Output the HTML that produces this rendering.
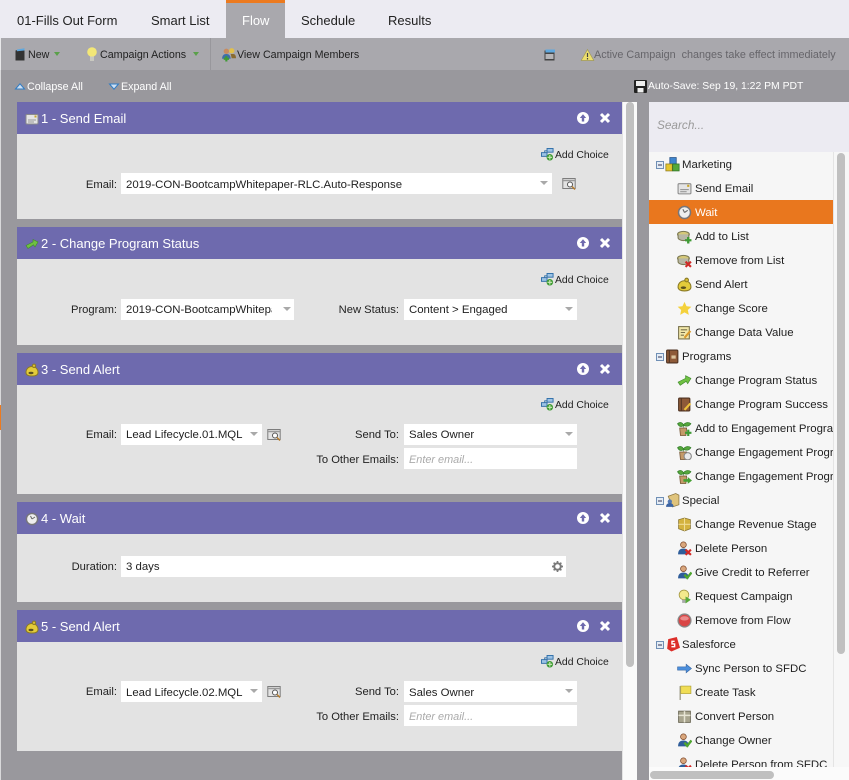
<!DOCTYPE html>
<html><head><meta charset="utf-8">
<style>
html,body{margin:0;padding:0;width:849px;height:780px;overflow:hidden;background:#99989d}
body{position:relative;font-family:"Liberation Sans",sans-serif;font-size:11.4px;color:#222}
.a{position:absolute}
.t{position:absolute;white-space:nowrap;line-height:16px;font-size:10.7px}
.tab{position:absolute;top:13px;font-size:13px;line-height:16px;color:#222;white-space:nowrap}
.hd{position:absolute;left:17px;width:605px;height:32px;background:#6e6aae}
.bd{position:absolute;left:17px;width:605px;background:#e3e3e3}
.ht{position:absolute;left:41px;color:#fff;font-size:13px;line-height:16px;white-space:nowrap}
.f{position:absolute;background:#fff;height:21px;line-height:22px;padding-left:5px;box-sizing:border-box;white-space:nowrap;overflow:hidden;color:#222;font-size:11.4px}
.f.lo{line-height:24px}
.ph{color:#aaa;font-style:italic;font-size:10.9px}
.c{position:absolute;width:0;height:0;border-left:4px solid transparent;border-right:4px solid transparent;border-top:4px solid #a9a9a9}
.l{position:absolute;text-align:right;white-space:nowrap;line-height:16px;color:#222;font-size:11.2px;transform:translateY(1px)}
.li{position:absolute;white-space:nowrap;line-height:16px;color:#222;font-size:11.4px}
.ac{position:absolute;left:555px;white-space:nowrap;line-height:16px;font-size:10.4px;color:#222;transform:translateY(1px)}
svg{position:absolute;overflow:visible}
</style></head><body>
<svg width="0" height="0" style="position:absolute"><defs>
<symbol id="mail" viewBox="0 0 14 14"><rect x="1" y="2.500" width="12" height="9.500" rx="1" fill="#e4e4e4" stroke="#8b8b8b"/><path d="M3 8h8M3 10h6" stroke="#999"/><rect x="9.500" y="3.500" width="2" height="2" fill="#c9a52a"/></symbol>
<symbol id="clock" viewBox="0 0 14 14"><circle cx="7" cy="7" r="5.600" fill="#eee" stroke="#77767a" stroke-width="1.400"/><path d="M7 7l3-2M7 7L5.500 4" stroke="#666"/></symbol>
<symbol id="listadd" viewBox="0 0 14 14"><ellipse cx="6" cy="5" rx="5.500" ry="2.800" fill="#d5c878" stroke="#7d7a55"/><path d="M1 5v3c0 1.500 2.500 2.800 5 2.800s5-1 5-2.800V5" fill="#b8b7a5" stroke="#7d7a55"/><path d="M10.500 7.500v6M7.500 10.500h6" stroke="#3f9b35" stroke-width="2.200"/></symbol>
<symbol id="listrm" viewBox="0 0 14 14"><ellipse cx="6" cy="5" rx="5.500" ry="2.800" fill="#d5c878" stroke="#7d7a55"/><path d="M1 5v3c0 1.500 2.500 2.800 5 2.800s5-1 5-2.800V5" fill="#b8b7a5" stroke="#7d7a55"/><path d="M8 8l5 5M13 8l-5 5" stroke="#cf2a27" stroke-width="2"/></symbol>
<symbol id="bell" viewBox="0 0 14 14"><path d="M1 9.500C1 6 3.500 3.500 7 3.500s6 2.500 6 6c0 2.300-2.500 3.500-6 3.500s-6-1.200-6-3.500z" fill="#e3cb3a" stroke="#8a7a25"/><circle cx="9" cy="2.800" r="1.700" fill="#d8bd35" stroke="#8a7a25"/><ellipse cx="6" cy="10" rx="2.500" ry="1.200" fill="#5a5020"/></symbol>
<symbol id="star" viewBox="0 0 14 14"><path d="M7 .8l1.900 4.100 4.500.5-3.300 3 .9 4.500L7 10.600 3 12.900l.9-4.500-3.300-3 4.500-.5z" fill="#f4d13b"/></symbol>
<symbol id="edit" viewBox="0 0 14 14"><rect x="1.500" y="1.500" width="10" height="11.500" fill="#f2e8a9" stroke="#77704a"/><path d="M3.500 4.500h6M3.500 7h4M3.500 9.500h3" stroke="#77704a"/><path d="M12.500 5.500L7 12" stroke="#d99a2b" stroke-width="2"/></symbol>
<symbol id="arrow" viewBox="0 0 14 14"><path d="M1 8.500l7-3.500V2.500l5 2.500-3 5-1.500-2.200L3 11.500z" fill="#6fc042" stroke="#3e8a2a" stroke-width=".6"/></symbol>
<symbol id="book" viewBox="0 0 14 14"><rect x="1.500" y="1" width="10.500" height="12" rx="1" fill="#8e5a38" stroke="#4f3322"/><path d="M4 1v12" stroke="#4f3322"/><path d="M6 6h4v3H6z" fill="#dcc39c"/></symbol>
<symbol id="booke" viewBox="0 0 14 14"><rect x="1.500" y="1" width="10.500" height="12" rx="1" fill="#8e5a38" stroke="#4f3322"/><path d="M4 1v12" stroke="#4f3322"/><path d="M12.500 6L7 12" stroke="#edc13a" stroke-width="2"/></symbol>
<symbol id="plant" viewBox="0 0 14 14"><path d="M6 6V3M.5 2.500C3 .5 5 1.500 6 3.500 8 1 11 .8 13 2.500 11 5.500 8 5 6 4 4.500 6 2 5.500.5 2.500z" fill="#55a63c" stroke="#2e7a25" stroke-width=".6"/><path d="M2.500 6.500h6.500l-.7 7H3.200z" fill="#c49a68" stroke="#72512f" stroke-width=".7"/></symbol>
<symbol id="plantadd" viewBox="0 0 14 14"><use href="#plant" width="14" height="14"/><path d="M10.500 8v6M7.500 11h6" stroke="#3f9b35" stroke-width="2"/></symbol>
<symbol id="plantclock" viewBox="0 0 14 14"><use href="#plant" width="14" height="14"/><circle cx="10" cy="10.500" r="3.400" fill="#e9e9e9" stroke="#888"/></symbol>
<symbol id="plantarrow" viewBox="0 0 14 14"><use href="#plant" width="14" height="14"/><path d="M6 9.500h4V7.500l4 3.200-4 3.200v-2H6z" fill="#46a032"/></symbol>
<symbol id="cubes" viewBox="0 0 14 14"><rect x="4.500" y=".5" width="6" height="6" fill="#3f86cf" stroke="#234f85" stroke-width=".7"/><rect x=".8" y="6.500" width="6" height="6.500" fill="#e5c62e" stroke="#8b7a20" stroke-width=".7"/><rect x="7.200" y="6.500" width="6" height="6.500" fill="#54a93a" stroke="#2f6f25" stroke-width=".7"/></symbol>
<symbol id="folder" viewBox="0 0 14 14"><path d="M3 3l7-2.500 3 1.500v9l-6 2z" fill="#e0c47c" stroke="#8d7640" stroke-width=".7"/><circle cx="4.500" cy="8" r="2" fill="#5479b2"/><path d="M1 13c0-2.500 1.500-3.500 3.500-3.500S8 10.500 8 13z" fill="#3c64a3"/></symbol>
<symbol id="box" viewBox="0 0 14 14"><path d="M1.500 2.500L7 1l5.500 1.500V11L7 13l-5.500-2z" fill="#d3b23f" stroke="#86722e" stroke-width=".7"/><path d="M7 1v12M1.500 6.800h11" stroke="#f0dc94"/></symbol>
<symbol id="pdel" viewBox="0 0 14 14"><circle cx="6" cy="3.500" r="2.700" fill="#d9a67c" stroke="#7e4a2c" stroke-width=".7"/><path d="M1 12.500c0-4 2-5.500 5-5.500s5 1.500 5 5.500z" fill="#2f5d9a"/><path d="M8 8l5 5M13 8l-5 5" stroke="#d32825" stroke-width="2"/></symbol>
<symbol id="pok" viewBox="0 0 14 14"><circle cx="6" cy="3.500" r="2.700" fill="#d9a67c" stroke="#7e4a2c" stroke-width=".7"/><path d="M1 12.500c0-4 2-5.500 5-5.500s5 1.500 5 5.500z" fill="#2f5d9a"/><path d="M7 9l2.500 3L13.500 7" stroke="#4ea52f" stroke-width="2.200" fill="none"/></symbol>
<symbol id="bulb" viewBox="0 0 14 14"><circle cx="6.500" cy="5.500" r="4.500" fill="#f4e98c" stroke="#a69a45" stroke-width=".8"/><rect x="4.800" y="10" width="3.400" height="3" fill="#aaa"/><path d="M8 7l5 3-5 3.500z" fill="#58a93a"/></symbol>
<symbol id="stop" viewBox="0 0 14 14"><circle cx="7" cy="7" r="6" fill="#d94646" stroke="#888" stroke-width="1.200"/><ellipse cx="7" cy="5" rx="4" ry="2" fill="#ea8b8b"/></symbol>
<symbol id="sf" viewBox="0 0 14 14"><path d="M3 2l8-2 3 10-8 3.500L2 11z" fill="#dc2f2a"/><path d="M9 4H6.500v2.500H9v2.500H6" stroke="#fff" stroke-width="1.300" fill="none"/></symbol>
<symbol id="sync" viewBox="0 0 14 14"><path d="M.5 5.500h8V3l5 4-5 4V8.500h-8z" fill="#4c8fdc" stroke="#2d5c9b" stroke-width=".5"/></symbol>
<symbol id="flag" viewBox="0 0 14 14"><path d="M3 1v13" stroke="#a8a695" stroke-width="1.400"/><path d="M3.500 1h9.500v7H3.500z" fill="#f0dd55" stroke="#aa9c30" stroke-width=".6"/></symbol>
<symbol id="conv" viewBox="0 0 14 14"><rect x="1.500" y="2" width="11" height="10.500" fill="#a9a58f" stroke="#65624f" stroke-width=".8"/><path d="M1.500 6h11M7 2v10.500" stroke="#e8e5d5" stroke-width="1.400"/></symbol>
<symbol id="srch" viewBox="0 0 14 14"><rect x=".8" y="1.500" width="12.400" height="10" fill="#e3e3e3" stroke="#7d7d7d"/><path d="M1 3.500h12" stroke="#9a9a9a" stroke-width="1.500"/><circle cx="8" cy="7.500" r="2.500" fill="#fff" stroke="#555"/><path d="M10 9.500l3 3" stroke="#b57c2d" stroke-width="1.500"/></symbol>
<symbol id="addc" viewBox="0 0 14 14"><rect x=".5" y="5" width="6" height="4" fill="#9cc3e5" stroke="#2f6ea8"/><rect x="6.500" y=".5" width="6.500" height="4" fill="#9cc3e5" stroke="#2f6ea8"/><path d="M4 5V3h3" stroke="#2f6ea8" fill="none"/><circle cx="9.500" cy="10" r="3.500" fill="#3e9a33"/><path d="M9.500 7.500v5M7 10h5" stroke="#cbeab8" stroke-width="1.200"/></symbol>
<symbol id="up" viewBox="0 0 12 12"><circle cx="6" cy="6" r="6" fill="#fff"/><path d="M6 2.300L2.800 6h2v3.500h2.400V6h2z" fill="#6e6aae"/></symbol>
<symbol id="x" viewBox="0 0 12 12"><path d="M2 2l8 8M10 2l-8 8" stroke="#fff" stroke-width="3"/></symbol>
<symbol id="mm" viewBox="0 0 8 8"><rect x=".5" y=".5" width="7" height="7" fill="#e4ecf5" stroke="#6f8fb5"/><path d="M2 4h4" stroke="#335"/></symbol>
</defs></svg>

<!-- tabs -->
<div class="a" style="left:0;top:0;width:849px;height:38px;background:#ecebf2"></div>
<div class="a" style="left:226px;top:0;width:59px;height:38px;background:#a9a8ad"></div>
<div class="a" style="left:226px;top:0;width:59px;height:3px;background:#ec7a1f"></div>
<div class="tab" style="left:17px">01-Fills Out Form</div>
<div class="tab" style="left:151px">Smart List</div>
<div class="tab" style="left:242px;color:#fff">Flow</div>
<div class="tab" style="left:301px">Schedule</div>
<div class="tab" style="left:388px">Results</div>

<!-- toolbar -->
<div class="a" style="left:1px;top:38px;width:848px;height:32px;background:#a9a8ad"></div>
<div class="a" style="left:0;top:38px;width:1px;height:32px;background:#e8e8ea"></div>
<div class="a" style="left:210px;top:38px;width:1px;height:32px;background:#98979c"></div>
<svg style="left:15px;top:48px" width="10" height="13" viewBox="0 0 10 13"><path d="M.5 2.500L8 1l1.500.8V12.500H.5z" fill="#333"/><path d="M2 1.500l7.500-1.200v2.200l-7.500.8z" fill="#5ea7de"/></svg>
<div class="t" style="left:28px;top:47px">New</div>
<div class="a" style="left:54px;top:52px;border-left:3px solid transparent;border-right:3px solid transparent;border-top:4px solid #5aa04a;width:0;height:0"></div>
<svg style="left:87px;top:47px" width="10" height="15" viewBox="0 0 10 15"><circle cx="5" cy="5" r="4.800" fill="#f3e777"/><rect x="3" y="9.500" width="4" height="4.500" fill="#c9c9c0"/></svg>
<div class="t" style="left:100px;top:47px">Campaign Actions</div>
<div class="a" style="left:193px;top:52px;border-left:3px solid transparent;border-right:3px solid transparent;border-top:4px solid #5aa04a;width:0;height:0"></div>
<svg style="left:221px;top:47px" width="15" height="15" viewBox="0 0 14 14"><circle cx="5" cy="4" r="2.500" fill="#c98b5e"/><circle cx="10" cy="3.500" r="2.500" fill="#e2c04a"/><path d="M1 11c0-3 1.500-4.500 4-4.500S9 8 9 11z" fill="#3e6ea8"/><path d="M9 6.500h2.500c1.500 0 2.500 1.500 2.500 4h-4z" fill="#8a6b30"/><path d="M5 8.500v5M2.500 11h5" stroke="#3f9b35" stroke-width="2"/></svg>
<div class="t" style="left:237px;top:47px">View Campaign Members</div>
<svg style="left:544px;top:49px" width="11" height="12" viewBox="0 0 11 12"><rect x=".5" y="1.500" width="10" height="10" fill="#444"/><rect x="1.500" y=".5" width="9.500" height="3" fill="#5ea7de"/><rect x="1.500" y="5" width="8" height="5" fill="#b5b5b8"/></svg>
<svg style="left:581px;top:49px" width="13" height="12" viewBox="0 0 13 12"><path d="M6.500.5L12.800 11.500H.2z" fill="#ecdf6e" stroke="#a39a55" stroke-width=".7"/><path d="M6.500 4v4M6.500 9v1.500" stroke="#444" stroke-width="1.200"/></svg>
<div class="t" style="left:594px;top:47px;color:#66656a;font-size:10.8px">Active Campaign&nbsp; changes take effect immediately</div>

<!-- subbar -->
<svg style="left:15px;top:83px" width="10" height="7" viewBox="0 0 10 7"><path d="M5 .8L9.500 6H.5z" fill="#cfe0f2" stroke="#2f7cc4"/></svg>
<div class="t" style="left:27px;top:79px;color:#fff">Collapse All</div>
<svg style="left:109px;top:83px" width="10" height="7" viewBox="0 0 10 7"><path d="M5 6.200L9.500 1H.5z" fill="#cfe0f2" stroke="#2f7cc4"/></svg>
<div class="t" style="left:121px;top:79px;color:#fff">Expand All</div>
<svg style="left:634px;top:80px" width="13" height="13" viewBox="0 0 13 13"><rect width="13" height="13" rx="1" fill="#222"/><rect x="2" y="1" width="9" height="5" fill="#eee"/><rect x="3.500" y="8" width="6" height="4.500" fill="#eee"/></svg>
<div class="t" style="left:648px;top:79px;color:#fff;font-size:10.4px">Auto-Save: Sep 19, 1:22 PM PDT</div>

<div class="a" style="left:0;top:70px;width:1px;height:710px;background:#d9d9db"></div>
<div class="a" style="left:0;top:405px;width:1px;height:25px;background:#ec7a1f"></div>

<!-- panel 1 -->
<div class="hd" style="top:102px"></div><div class="bd" style="top:134px;height:85px"></div>
<svg style="left:25px;top:112px" width="14" height="14"><use href="#mail"/></svg>
<div class="ht" style="top:111px">1 - Send Email</div>
<svg style="left:577px;top:112px" width="12" height="12"><use href="#up"/></svg>
<svg style="left:599px;top:112px" width="12" height="12"><use href="#x"/></svg>
<svg style="left:541px;top:148px" width="13" height="13"><use href="#addc"/></svg>
<div class="ac" style="top:147px">Add Choice</div>
<div class="l" style="right:732px;top:176px">Email:</div>
<div class="f lo" style="left:121px;top:173px;width:431px">2019-CON-BootcampWhitepaper-RLC.Auto-Response</div>
<div class="c" style="left:540px;top:181px"></div>
<svg style="left:562px;top:177px" width="14" height="14"><use href="#srch"/></svg>

<!-- panel 2 -->
<div class="hd" style="top:227px"></div><div class="bd" style="top:259px;height:86px"></div>
<svg style="left:25px;top:237px" width="14" height="14"><use href="#arrow"/></svg>
<div class="ht" style="top:236px">2 - Change Program Status</div>
<svg style="left:577px;top:237px" width="12" height="12"><use href="#up"/></svg>
<svg style="left:599px;top:237px" width="12" height="12"><use href="#x"/></svg>
<svg style="left:541px;top:273px" width="13" height="13"><use href="#addc"/></svg>
<div class="ac" style="top:272px">Add Choice</div>
<div class="l" style="right:732px;top:301px">Program:</div>
<div class="f" style="left:121px;top:299px;width:173px"><span style="display:inline-block;width:146px;overflow:hidden;vertical-align:top">2019-CON-BootcampWhitepaper</span></div>
<div class="c" style="left:283px;top:307px"></div>
<div class="l" style="right:450px;top:301px">New Status:</div>
<div class="f" style="left:404px;top:299px;width:173px">Content &gt; Engaged</div>
<div class="c" style="left:565px;top:307px"></div>

<!-- panel 3 -->
<div class="hd" style="top:353px"></div><div class="bd" style="top:385px;height:109px"></div>
<svg style="left:25px;top:363px" width="14" height="14"><use href="#bell"/></svg>
<div class="ht" style="top:362px">3 - Send Alert</div>
<svg style="left:577px;top:363px" width="12" height="12"><use href="#up"/></svg>
<svg style="left:599px;top:363px" width="12" height="12"><use href="#x"/></svg>
<svg style="left:541px;top:398px" width="13" height="13"><use href="#addc"/></svg>
<div class="ac" style="top:397px">Add Choice</div>
<div class="l" style="right:732px;top:426px">Email:</div>
<div class="f" style="left:121px;top:424px;width:141px">Lead Lifecycle.01.MQL</div>
<div class="c" style="left:250px;top:432px"></div>
<svg style="left:267px;top:428px" width="14" height="14"><use href="#srch"/></svg>
<div class="l" style="right:450px;top:426px">Send To:</div>
<div class="f" style="left:404px;top:424px;width:173px">Sales Owner</div>
<div class="c" style="left:565px;top:432px"></div>
<div class="l" style="right:450px;top:451px">To Other Emails:</div>
<div class="f ph lo" style="left:404px;top:448px;width:173px;color:#aaa;font-size:10.9px">Enter email...</div>

<!-- panel 4 -->
<div class="hd" style="top:502px"></div><div class="bd" style="top:534px;height:68px"></div>
<svg style="left:25px;top:512px" width="14" height="14"><use href="#clock"/></svg>
<div class="ht" style="top:511px">4 - Wait</div>
<svg style="left:577px;top:512px" width="12" height="12"><use href="#up"/></svg>
<svg style="left:599px;top:512px" width="12" height="12"><use href="#x"/></svg>
<div class="l" style="right:732px;top:558px">Duration:</div>
<div class="f" style="left:121px;top:556px;width:445px">3 days</div>
<svg style="left:552px;top:561px" width="11" height="11" viewBox="0 0 12 12"><circle cx="6" cy="6" r="3.600" fill="none" stroke="#7a7a7a" stroke-width="2.200"/><path d="M6 0v2.500M6 9.500V12M0 6h2.500M9.500 6H12M1.800 1.800l1.800 1.800M8.400 8.400l1.800 1.800M10.200 1.800L8.400 3.600M3.600 8.400l-1.800 1.800" stroke="#7a7a7a" stroke-width="1.800"/></svg>

<!-- panel 5 -->
<div class="hd" style="top:610px"></div><div class="bd" style="top:642px;height:109px"></div>
<svg style="left:25px;top:620px" width="14" height="14"><use href="#bell"/></svg>
<div class="ht" style="top:619px">5 - Send Alert</div>
<svg style="left:577px;top:620px" width="12" height="12"><use href="#up"/></svg>
<svg style="left:599px;top:620px" width="12" height="12"><use href="#x"/></svg>
<svg style="left:541px;top:655px" width="13" height="13"><use href="#addc"/></svg>
<div class="ac" style="top:654px">Add Choice</div>
<div class="l" style="right:732px;top:683px">Email:</div>
<div class="f lo" style="left:121px;top:681px;width:141px">Lead Lifecycle.02.MQL</div>
<div class="c" style="left:250px;top:689px"></div>
<svg style="left:267px;top:685px" width="14" height="14"><use href="#srch"/></svg>
<div class="l" style="right:450px;top:683px">Send To:</div>
<div class="f lo" style="left:404px;top:681px;width:173px">Sales Owner</div>
<div class="c" style="left:565px;top:689px"></div>
<div class="l" style="right:450px;top:708px">To Other Emails:</div>
<div class="f ph lo" style="left:404px;top:705px;width:173px;color:#aaa;font-size:10.9px">Enter email...</div>

<!-- main scrollbar -->
<div class="a" style="left:622px;top:102px;width:15px;height:678px;background:#fafafa"></div>
<div class="a" style="left:622px;top:102px;width:1px;height:678px;background:#e3e3e3"></div>
<div class="a" style="left:626px;top:102px;width:8px;height:565px;border-radius:4px;background:#c0c0c0"></div>

<!-- right palette -->
<div class="a" style="left:649px;top:102px;width:200px;height:50px;background:#ecebf2"></div>
<div class="t" style="left:657px;top:117px;color:#9a9a9a;font-style:italic;font-size:11.8px">Search...</div>
<div class="a" style="left:649px;top:152px;width:184px;height:615px;background:#f6f6f6"></div>
<div class="a" style="left:833px;top:152px;width:16px;height:615px;background:#f7f7f7;border-left:1px solid #e4e4e4;box-sizing:border-box"></div>
<div class="a" style="left:837px;top:153px;width:8px;height:501px;border-radius:4px;background:#c0c0c0"></div>
<div class="a" style="left:649px;top:767px;width:200px;height:13px;background:#fbfbfb"></div>
<div class="a" style="left:650px;top:771px;width:124px;height:8px;border-radius:4px;background:#c0c0c0"></div>
<div class="a" style="left:649px;top:200px;width:184px;height:24px;background:#e9771e"></div>

<!-- tree -->
<div class="a" style="left:0;top:1px;width:849px;height:766px">
<svg style="left:656px;top:160px" width="8" height="8"><use href="#mm"/></svg>
<svg style="left:665px;top:156px" width="15" height="15"><use href="#cubes"/></svg>
<div class="li" style="left:682px;top:156px">Marketing</div>
<svg style="left:677px;top:180px" width="15" height="15"><use href="#mail"/></svg>
<div class="li" style="left:695px;top:180px">Send Email</div>
<svg style="left:677px;top:204px" width="15" height="15"><use href="#clock"/></svg>
<div class="li" style="left:695px;top:204px;color:#fff">Wait</div>
<svg style="left:677px;top:228px" width="15" height="15"><use href="#listadd"/></svg>
<div class="li" style="left:695px;top:228px">Add to List</div>
<svg style="left:677px;top:252px" width="15" height="15"><use href="#listrm"/></svg>
<div class="li" style="left:695px;top:252px">Remove from List</div>
<svg style="left:677px;top:276px" width="15" height="15"><use href="#bell"/></svg>
<div class="li" style="left:695px;top:276px">Send Alert</div>
<svg style="left:677px;top:300px" width="15" height="15"><use href="#star"/></svg>
<div class="li" style="left:695px;top:300px">Change Score</div>
<svg style="left:677px;top:324px" width="15" height="15"><use href="#edit"/></svg>
<div class="li" style="left:695px;top:324px">Change Data Value</div>

<svg style="left:656px;top:352px" width="8" height="8"><use href="#mm"/></svg>
<svg style="left:665px;top:348px" width="15" height="15"><use href="#book"/></svg>
<div class="li" style="left:682px;top:348px">Programs</div>
<svg style="left:677px;top:372px" width="15" height="15"><use href="#arrow"/></svg>
<div class="li" style="left:695px;top:372px">Change Program Status</div>
<svg style="left:677px;top:396px" width="15" height="15"><use href="#booke"/></svg>
<div class="li" style="left:695px;top:396px">Change Program Success</div>
<svg style="left:677px;top:420px" width="15" height="15"><use href="#plantadd"/></svg>
<div class="a" style="left:695px;top:420px;width:138px;overflow:hidden;height:16px"><div class="li" style="left:0;top:0">Add to Engagement Program</div></div>
<svg style="left:677px;top:444px" width="15" height="15"><use href="#plantclock"/></svg>
<div class="a" style="left:695px;top:444px;width:138px;overflow:hidden;height:16px"><div class="li" style="left:0;top:0">Change Engagement Program</div></div>
<svg style="left:677px;top:468px" width="15" height="15"><use href="#plantarrow"/></svg>
<div class="a" style="left:695px;top:468px;width:138px;overflow:hidden;height:16px"><div class="li" style="left:0;top:0">Change Engagement Program</div></div>

<svg style="left:656px;top:496px" width="8" height="8"><use href="#mm"/></svg>
<svg style="left:665px;top:492px" width="15" height="15"><use href="#folder"/></svg>
<div class="li" style="left:682px;top:492px">Special</div>
<svg style="left:677px;top:516px" width="15" height="15"><use href="#box"/></svg>
<div class="li" style="left:695px;top:516px">Change Revenue Stage</div>
<svg style="left:677px;top:540px" width="15" height="15"><use href="#pdel"/></svg>
<div class="li" style="left:695px;top:540px">Delete Person</div>
<svg style="left:677px;top:564px" width="15" height="15"><use href="#pok"/></svg>
<div class="li" style="left:695px;top:564px">Give Credit to Referrer</div>
<svg style="left:677px;top:588px" width="15" height="15"><use href="#bulb"/></svg>
<div class="li" style="left:695px;top:588px">Request Campaign</div>
<svg style="left:677px;top:612px" width="15" height="15"><use href="#stop"/></svg>
<div class="li" style="left:695px;top:612px">Remove from Flow</div>

<svg style="left:656px;top:640px" width="8" height="8"><use href="#mm"/></svg>
<svg style="left:665px;top:636px" width="15" height="15"><use href="#sf"/></svg>
<div class="li" style="left:682px;top:636px">Salesforce</div>
<svg style="left:677px;top:660px" width="15" height="15"><use href="#sync"/></svg>
<div class="li" style="left:695px;top:660px">Sync Person to SFDC</div>
<svg style="left:677px;top:684px" width="15" height="15"><use href="#flag"/></svg>
<div class="li" style="left:695px;top:684px">Create Task</div>
<svg style="left:677px;top:708px" width="15" height="15"><use href="#conv"/></svg>
<div class="li" style="left:695px;top:708px">Convert Person</div>
<svg style="left:677px;top:732px" width="15" height="15"><use href="#pok"/></svg>
<div class="li" style="left:695px;top:732px">Change Owner</div>
<div class="a" style="left:649px;top:752px;width:184px;height:14px;overflow:hidden">
<svg style="left:28px;top:4px" width="15" height="15"><use href="#pdel"/></svg>
<div class="li" style="left:46px;top:4px">Delete Person from SFDC</div></div>
</div>
</body></html>
